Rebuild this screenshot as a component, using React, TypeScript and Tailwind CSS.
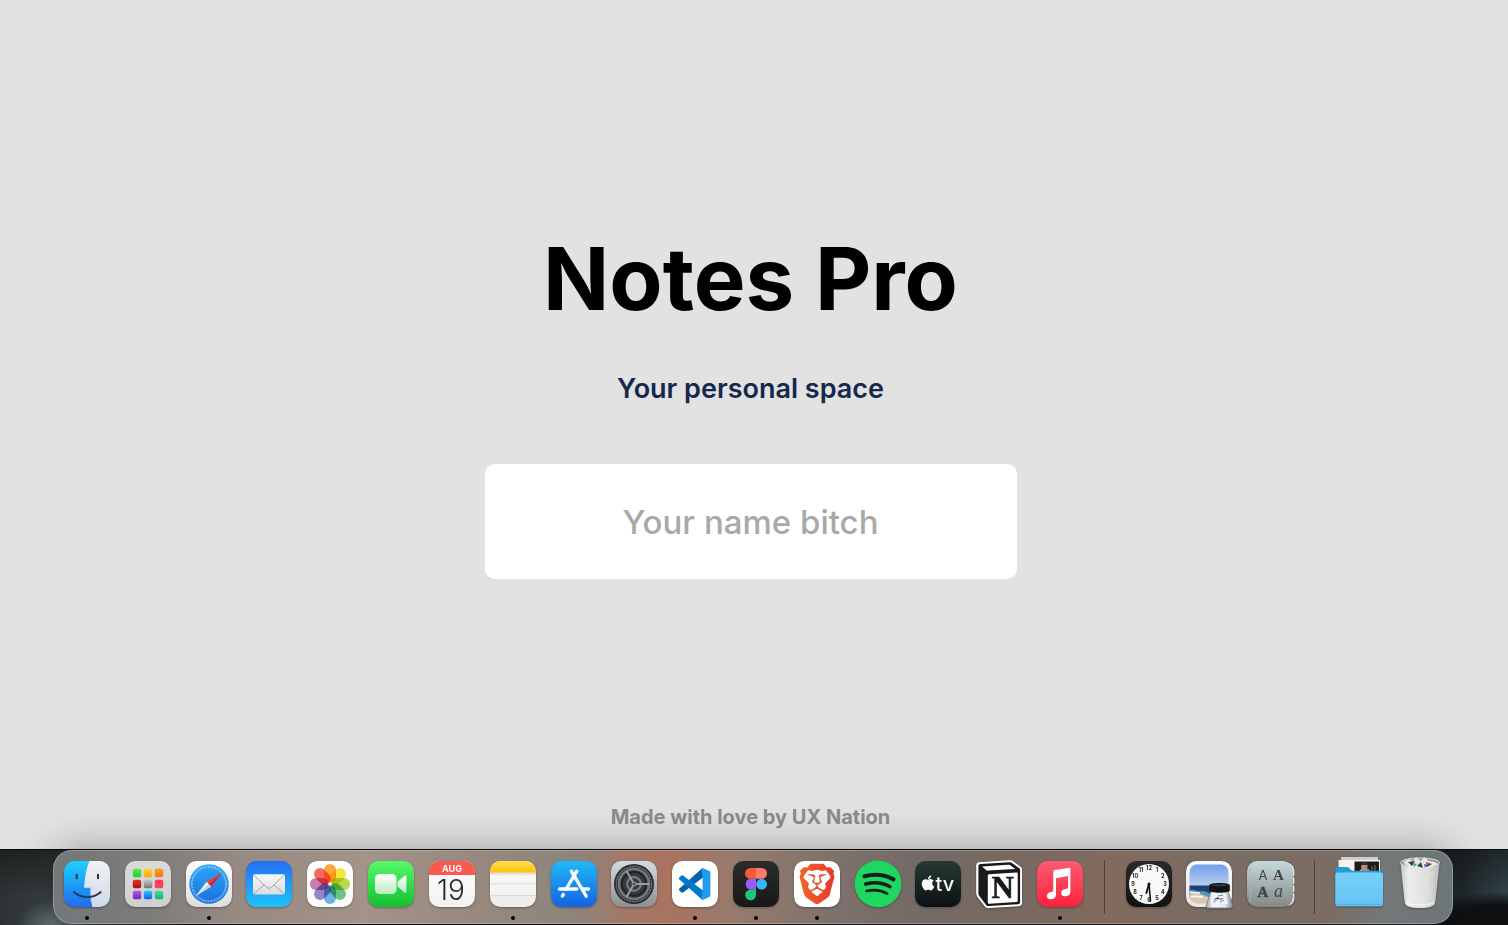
import React from "react";
import { FaApple } from "react-icons/fa";
import { SiBrave } from "react-icons/si";

const SANS = "Inter, 'Liberation Sans', sans-serif";
const SERIF = "'Liberation Serif', serif";

function Gradient({ id, stops }: { id: string; stops: string[] }) {
  return (
    <linearGradient id={id} x1="0" y1="0" x2="0" y2="1">
      {stops.map((color, i) => (
        <stop key={i} offset={i / (stops.length - 1)} stopColor={color} />
      ))}
    </linearGradient>
  );
}

function Icon({ children }: { children: React.ReactNode }) {
  return (
    <svg viewBox="0 0 46 46" className="size-[46px] overflow-visible drop-shadow-[0_1px_1px_rgba(0,0,0,0.3)]" aria-hidden="true">
      {children}
    </svg>
  );
}

function Tile({ id, stops }: { id: string; stops: string[] }) {
  return (
    <>
      <defs>
        <Gradient id={id} stops={stops} />
        <clipPath id={id + "-clip"}>
          <rect width="46" height="46" rx="10.5" />
        </clipPath>
      </defs>
      <rect width="46" height="46" rx="10.5" fill={`url(#${id})`} />
    </>
  );
}

function Finder() {
  return (
    <Icon>
      <Tile id="finder" stops={["#1fd0fd", "#1d6cf2"]} />
      <defs><Gradient id="finder-face" stops={["#f3f2f4", "#ced9e8"]} /></defs>
      <path clipPath="url(#finder-clip)" fill="url(#finder-face)" d="M25.5 0C22.5 7 20.8 16 20 26.7h6.4c-.2 7 .2 13 2.1 19.3H46V0z" />
      <path d="M12.7 13.8v3.5M34 13.8v3.5" stroke="#263a50" strokeWidth="2.1" strokeLinecap="round" />
      <path d="M9.8 31c7.8 6.800 19.300 6.800 27 0" fill="none" stroke="#26384d" strokeWidth="1.7" strokeLinecap="round" />
    </Icon>
  );
}

const launchpadCells = [
  ["#61e94c", "#20cf35"], ["#ffd22e", "#fba80b"], ["#ffa41a", "#ea7813"],
  ["#ea2f2c", "#ac100d"], ["#c5cdd0", "#6d7476"], ["#ff3d59", "#ff4162"],
  ["#b65ae5", "#7625b5"], ["#22cbfa", "#175af0"], ["#43dfa4", "#17ae79"],
];

function Launchpad() {
  return (
    <Icon>
      <Tile id="launchpad" stops={["#d9dad9", "#cfd0cf"]} />
      {launchpadCells.map((stops, i) => (
        <React.Fragment key={i}>
          <defs><Gradient id={`launch-${i}`} stops={stops} /></defs>
          <rect x={7.8 + (i % 3) * 11} y={7.8 + Math.floor(i / 3) * 11} width="8.4" height="8.4" rx="1.8" fill={`url(#launch-${i})`} />
        </React.Fragment>
      ))}
    </Icon>
  );
}

function Safari() {
  return (
    <Icon>
      <Tile id="safari" stops={["#ffffff", "#dddddf"]} />
      <defs><Gradient id="safari-sea" stops={["#2ba7f7", "#1c70dc"]} /></defs>
      <circle cx="23" cy="23" r="19.7" fill="url(#safari-sea)" />
      <circle cx="23" cy="23" r="17.2" fill="none" stroke="#c2e5ff" strokeWidth="2.2" strokeDasharray=".6 .9" opacity=".85" />
      <path d="M36.4 11.2 25.2 25.5l-4.6-4.8z" fill="#ec413c" />
      <path d="m9.8 35 10.8-14.3 4.6 4.8z" fill="#f0f5fa" />
      <path d="m9.8 35 13.1-11.9 2.3 2.4z" fill="#c4d2df" />
      <path d="M36.4 11.2 25.2 25.5l-2.3-2.4z" fill="#c92c32" />
    </Icon>
  );
}

function Mail() {
  return (
    <Icon>
      <Tile id="mail" stops={["#236ef3", "#1fc4fb"]} />
      <defs><Gradient id="mail-paper" stops={["#f8f8f8", "#d9dcde"]} /></defs>
      <rect x="7" y="13.2" width="32" height="20.2" rx="1.8" fill="url(#mail-paper)" />
      <path d="m7.6 14 13 12.2c1.6 1.4 3.2 1.4 4.8 0L38.4 14M7.8 32.8l10.4-9M38.2 32.8l-10.4-9" fill="none" stroke="#9b9ea2" strokeWidth=".9" />
    </Icon>
  );
}

const petals = ["#fc9a1d", "#f5e11b", "#a9d336", "#52bb72", "#58a7de", "#7c73bf", "#c066a3", "#fa514b"];

function Photos() {
  return (
    <Icon>
      <Tile id="photos" stops={["#ffffff", "#f9f9f9"]} />
      <g clipPath="url(#photos-clip)">
        {petals.map((color, i) => (
          <rect key={color} x="17" y="2.9" width="12" height="18.6" rx="6" fill={color} opacity=".86" transform={`rotate(${i * 45} 23 23)`} style={{ mixBlendMode: "multiply" }} />
        ))}
        <circle cx="23" cy="23" r="1.2" fill="#ffffff" opacity=".8" />
      </g>
    </Icon>
  );
}

function FaceTime() {
  return (
    <Icon>
      <Tile id="facetime" stops={["#58f76c", "#13c02f"]} />
      <defs><Gradient id="camera" stops={["#ffffff", "#b9eac0"]} /></defs>
      <rect x="7" y="13" width="21.5" height="20" rx="4.5" fill="url(#camera)" />
      <path d="m29.600 20.800 7.100-6.100c.8-.6 1.700-.3 1.700.7v15.500c0 1-.9 1.300-1.700.7l-7.100-6.100z" fill="url(#camera)" />
    </Icon>
  );
}

function Calendar() {
  return (
    <Icon>
      <Tile id="calendar" stops={["#ffffff", "#f1f1f0"]} />
      <path clipPath="url(#calendar-clip)" d="M0 0h46v14H0z" fill="#f95950" />
      <text x="23" y="10.800" textAnchor="middle" fontFamily={SANS} fontSize="9" fontWeight="700" fill="#ffffff">AUG</text>
      <text x="22" y="38.500" textAnchor="middle" fontFamily={SANS} fontSize="28" fontWeight="300" fill="#282828">19</text>
    </Icon>
  );
}

function NotesApp() {
  return (
    <Icon>
      <Tile id="notes" stops={["#ffffff", "#eeece8"]} />
      <defs><Gradient id="notes-top" stops={["#ffdd51", "#fdc305"]} /></defs>
      <path clipPath="url(#notes-clip)" d="M0 0h46v11.5H0z" fill="url(#notes-top)" />
      <path d="M0 12h46" stroke="#c8b98d" strokeWidth=".8" />
      <path d="M1 13.8h44" stroke="#b7b5b2" strokeWidth="1" strokeDasharray=".7 1.1" />
      <path d="M0 22.8h46M0 34.7h46" stroke="#cfcfcf" strokeWidth=".8" />
    </Icon>
  );
}

function AppStore() {
  return (
    <Icon>
      <Tile id="store" stops={["#1fb9f8", "#1462e2"]} />
      <g stroke="#f7fbff" strokeWidth="3.4" strokeLinecap="round">
        <path d="M25.8 10.2 15.2 28M20.4 10.2l14.8 25" />
        <path d="M8.5 28h17.2M32 28h5.5M12.200 33.600l-.8 1.400" />
      </g>
    </Icon>
  );
}

function Settings() {
  return (
    <Icon>
      <Tile id="settings" stops={["#d2dde1", "#8e8f8e"]} />
      <circle cx="23" cy="23" r="20" fill="#2b2d2f" />
      <circle cx="23" cy="23" r="17.600" fill="none" stroke="#8e9294" strokeWidth="1.300" strokeDasharray=".9 .7" />
      <circle cx="23" cy="23" r="15" fill="#383b3d" stroke="#75797b" strokeWidth="2.600" />
      <circle cx="23" cy="23" r="12" fill="none" stroke="#202224" strokeWidth="1.800" />
      <circle cx="23" cy="23" r="6.800" fill="none" stroke="#777b7d" strokeWidth="2.200" />
      <path d="M23 23h15M23 23 15.500 10M23 23l-7.500 13" stroke="#9a9ea0" strokeWidth="2" />
      <circle cx="23" cy="23" r="2" fill="#4b4e50" stroke="#9da1a3" />
    </Icon>
  );
}

function Code() {
  return (
    <Icon>
      <Tile id="code" stops={["#ffffff", "#ffffff"]} />
      <path d="m30.5 7 .5 9.5L11 31.4c-.5.4-1.1.4-1.6 0l-2-1.8c-.6-.6-.6-1.4 0-2z" fill="#0065a9" />
      <path d="m30.5 39 .5-9.5L11 14.6c-.5-.4-1.1-.4-1.6 0l-2 1.8c-.6.6-.6 1.4 0 2z" fill="#007acc" />
      <path d="M30.8 39c-.9.4-1.9.2-2.6-.5.9.9 2.4.2 2.4-1V8.500c0-1.200-1.500-1.900-2.400-1 .7-.7 1.700-.9 2.600-.5l6.500 3.100c.7.300 1.100 1 1.100 1.800v22.200c0 .8-.4 1.500-1.100 1.800z" fill="#1f9cf0" />
    </Icon>
  );
}

function FigmaApp() {
  return (
    <Icon>
      <Tile id="figma" stops={["#2c2c2d", "#181819"]} />
      <path d="M23 7h-5.600a5.400 5.400 0 0 0 0 10.800H23z" fill="#f65b32" />
      <path d="M23 7h5.600a5.400 5.400 0 0 1 0 10.800H23z" fill="#ff7a68" />
      <path d="M23 17.800h-5.600a5.400 5.400 0 0 0 0 10.700H23z" fill="#9b5cfb" />
      <circle cx="28.600" cy="23.200" r="5.400" fill="#38b8f8" />
      <path d="M23 28.500h-5.600a5.400 5.400 0 1 0 5.600 5.400z" fill="#18c77c" />
    </Icon>
  );
}

function Brave() {
  return (
    <Icon>
      <Tile id="brave" stops={["#ffffff", "#ffffff"]} />
      <defs>
        <linearGradient id="lion" x1="0" x2="1">
          <stop stopColor="#ef662b" />
          <stop offset="1" stopColor="#e8382a" />
        </linearGradient>
      </defs>
      <SiBrave x="2.500" y="2.500" size={41} fill="url(#lion)" />
    </Icon>
  );
}

function Spotify() {
  return (
    <Icon>
      <circle cx="23" cy="22.800" r="23.400" fill="#1ed760" />
      <g fill="none" stroke="#17201a" strokeLinecap="round">
        <path d="M9.500 15.300c10.200-2.700 20.700-1.500 29 3" strokeWidth="4.200" />
        <path d="M10.700 23c8.800-2.300 17.300-1.200 24.300 2.700" strokeWidth="3.500" />
        <path d="M11.700 30c7.300-1.700 14.300-.8 20.400 2.600" strokeWidth="2.800" />
      </g>
    </Icon>
  );
}

function AppleTV() {
  return (
    <Icon>
      <Tile id="appletv" stops={["#283934", "#0b1113"]} />
      <FaApple x="4.500" y="13.500" size={17} fill="#fafafa" />
      <text x="20.500" y="30" fontFamily={SANS} fontSize="20" fontWeight="500" fill="#fafafa">tv</text>
    </Icon>
  );
}

function NotionApp() {
  return (
    <Icon>
      <path d="M3.5 1.2 33-.7c1.8-.1 2.6.1 4 1l7.4 5.400c1.200.9 1.600 1.600 1.600 3.100v32.800c0 2.200-.8 3.500-3.500 3.700L13 47.100c-2 .1-3-.2-4.100-1.700L2 36.700C.8 35 .2 33.800.2 32V4.700c0-2.200 1-3.400 3.300-3.500z" fill="#ffffff" />
      <path d="M4.500 3 33 1.200c1.500-.1 2 0 3 .8l6.900 5c.9.700 1.200 1 1.200 1.900V41c0 1.400-.5 2.100-2.200 2.300L13 45.100c-1.400.1-2-.1-2.900-1.200L3.700 35.500c-.9-1.300-1.300-2.200-1.300-3.300V5.300C2.400 4 3 3.100 4.500 3z" fill="#191919" />
      <path d="M6 5.400 32.300 3.700c1.100-.1 1.500.1 2.300.7l4.700 3.500-27.400 1.700c-.8.100-1.300-.1-1.900-.6z" fill="#ffffff" />
      <path d="m13 13.200 27.200-1.700c1-.1 1.500.4 1.500 1.400v26.600c0 1-.4 1.500-1.500 1.600L13.400 42.700c-1.100.1-1.600-.4-1.600-1.500V14.700c0-1 .3-1.400 1.200-1.500z" fill="#ffffff" />
      <text x="26.700" y="37" textAnchor="middle" fontFamily={SERIF} fontSize="31" fontWeight="700" fill="#191919" stroke="#191919" strokeWidth=".5">N</text>
    </Icon>
  );
}

function Music() {
  return (
    <Icon>
      <Tile id="music" stops={["#fb5c74", "#fa233b"]} />
      <path d="M16.300 10.900c0-1 .5-1.600 1.400-1.800L32 6.900c.9-.2 1.400.3 1.400 1.200v22.600c0 2.500-1.800 4.300-5 4.600-2.600.2-4.200-1.100-4.200-3.300 0-2.300 1.700-3.800 4.300-4.100 1.700-.2 2.500-.5 2.500-1.900V15l-12 2.300v16.500c0 2.500-1.800 4.200-4.800 4.500-2.700.2-4.300-1.100-4.300-3.300 0-2.300 1.700-3.700 4.200-4 1.600-.2 2.200-.6 2.200-1.900z" fill="#ffffff" />
    </Icon>
  );
}

function Clock() {
  return (
    <Icon>
      <Tile id="clock" stops={["#2a2a2b", "#121213"]} />
      <circle cx="23" cy="23" r="20" fill="#f8f8f7" />
      {Array.from({ length: 12 }, (_, i) => {
        const angle = ((i + 1) * Math.PI) / 6;
        return (
          <text key={i} x={23 + 16 * Math.sin(angle)} y={25 - 16 * Math.cos(angle)} textAnchor="middle" fontFamily={SANS} fontSize="5.500" fontWeight="700" fill="#242424">
            {i + 1}
          </text>
        );
      })}
      <path d="m23 23-2.600 9" stroke="#171717" strokeWidth="2" strokeLinecap="round" />
      <path d="m23 23 1.500 17" stroke="#171717" strokeWidth="1.600" strokeLinecap="round" />
      <circle cx="23" cy="23" r="1.600" fill="#171717" />
    </Icon>
  );
}

function Preview() {
  return (
    <Icon>
      <Tile id="preview" stops={["#fafafa", "#e8e7e4"]} />
      <defs>
        <Gradient id="sky" stops={["#6f9eeb", "#bdd2ef"]} />
        <clipPath id="photo"><rect x="3.500" y="3.500" width="39" height="39" rx="7.500" /></clipPath>
        <linearGradient id="glass" x1="0" x2="1">
          <stop stopColor="#9aa0a4" />
          <stop offset=".25" stopColor="#f4f6f8" />
          <stop offset=".7" stopColor="#e4e9ee" />
          <stop offset="1" stopColor="#858b90" />
        </linearGradient>
      </defs>
      <g clipPath="url(#photo)">
        <path d="M3 3h40v23H3z" fill="url(#sky)" />
        <path d="M3 24.500h40V34H3z" fill="#233f78" />
        <path d="M3 29c6-1 8 2 15 1l7 3v4H3z" fill="#4f98b4" />
        <path d="M3 33c6-1.500 11-.5 14 1l8 3v6H3z" fill="#dac6ae" />
        <path d="M3 31.500c5-.5 7 .8 11 .5M5 36c5-2 8 .2 12 0" stroke="#f7fafa" strokeWidth="1.600" fill="none" />
      </g>
      <path d="M25.500 29h16l5.200 15.500c.5 1.700-.6 2.500-3 2.500H22.500c-2.300 0-3-.9-2.300-2.500z" fill="url(#glass)" stroke="#70767a" strokeWidth=".7" />
      <path d="M27 33h12.500l2.700 10H24.500z" fill="#eef3f8" />
      <path d="m32 35 5-1M28 38.500l4-2 2 2 3-1M27.500 41l3-1.500M34 41l4-2" stroke="#637b95" strokeWidth=".9" />
      <path d="M23.200 24.500c0-3.200 20.600-3.200 20.600 0v5c0 3-20.600 3-20.600 0z" fill="#121314" />
      <path d="M24 24.300c3-1.500 16-1.500 19 0-3 1.300-16 1.300-19 0z" fill="#393c3e" />
    </Icon>
  );
}

function FontBook() {
  return (
    <Icon>
      <path d="M38 1.500c6 0 9.500 3.500 9.500 9v4.200l-1.500 1 1.500 1v6l-1.500 1 1.500 1v6l-1.500 1 1.500 1V37c0 5-3.500 8-9 8z" fill="#d9dddc" />
      <Tile id="fontbook" stops={["#c4dadd", "#858887"]} />
      <path d="M3.500 5v36" stroke="#a9b8ba" strokeWidth="1" opacity=".7" />
      <g textAnchor="middle" fill="#414546">
        <text x="16" y="19" fontFamily={SANS} fontSize="13">A</text>
        <text x="31.500" y="19" fontFamily={SERIF} fontSize="15" fontWeight="700">A</text>
        <text x="16" y="35.500" fontFamily={SERIF} fontSize="15" fontWeight="700" stroke="#414546" strokeWidth=".5">A</text>
        <text x="31.500" y="35.500" fontFamily={SERIF} fontSize="18" fontStyle="italic">a</text>
      </g>
    </Icon>
  );
}

function Folder() {
  return (
    <Icon>
      <defs><Gradient id="folder-front" stops={["#75d1fa", "#66c4f5"]} /></defs>
      <path d="M5-4h37v17H5z" fill="#cfcfce" />
      <path d="M2.500-1h41.500v14H2.500z" fill="#f4f3f1" />
      <path d="M18.500.5H43V13H18.500z" fill="#1e1c19" />
      <path d="M22.500 12c1-3 2-3.500 3-4.500-1-3 .5-5.500 3-5.500s4 2.500 2.500 5.500c2 .5 3 2 3.500 4.500z" fill="#b58f7c" />
      <path d="M25 4c0-4 7-4 7 0z" fill="#39302b" />
      <path d="M36 5v7M39 4v8" stroke="#7c7365" />
      <path d="M-.6 8.500c0-1.600.8-2.500 2.500-2.500h9c3 0 3.200 3.700 6.300 3.700h27.300c1.600 0 2.500.8 2.500 2.500v30.500H-.6z" fill="#259cd3" />
      <path d="M-.6 13.500c0-1.300.8-2 2.200-2h43c1.500 0 2.400.7 2.400 2v29.200c0 1.700-.8 2.500-2.500 2.500H1.900c-1.700 0-2.500-.8-2.500-2.500z" fill="url(#folder-front)" />
      <path d="M0 43.500h46.500" stroke="#4aa9df" strokeWidth=".8" />
    </Icon>
  );
}

function Trash() {
  return (
    <Icon>
      <defs>
        <linearGradient id="bin" x1="0" x2="1">
          <stop stopColor="#c8c8c7" />
          <stop offset=".2" stopColor="#ececeb" />
          <stop offset=".7" stopColor="#dededd" />
          <stop offset="1" stopColor="#bdbdbd" />
        </linearGradient>
      </defs>
      <ellipse cx="23" cy="1.500" rx="19.500" ry="4.500" fill="#8d9290" stroke="#e1e4e3" />
      <path d="m6 1 6-3 4 2 3-4 5 4 3-4 5 4 6 1 3 2-8 5H13z" fill="#e6e8e7" />
      <path d="m11 1 4 4 3-5zM20 5l4-4 2 6zM29 1l6 2-5 3z" fill="#37423f" />
      <path d="m16 2 4 1-3 3z" fill="#2daa91" />
      <path d="m27 3 4 1-3 3z" fill="#3167c5" />
      <path d="m30 1 3 2-4 1z" fill="#dc673d" />
      <path d="M3.500 2c5 6.500 34 6.500 39 0l-4.200 39c-.4 3.500-3.400 6-15.300 6S8.200 44.500 7.700 41z" fill="url(#bin)" />
      <path d="m10 10 9 9-6 13 10 11 10-12-5-11 9-10" fill="none" stroke="#ffffff" strokeWidth="3" opacity=".12" />
      <path d="M9 41c4 4 23 4 28 0" fill="none" stroke="#fafafa" strokeWidth="1.500" opacity=".7" />
    </Icon>
  );
}

interface DockEntry {
  name: string;
  art: () => React.ReactElement;
  running?: boolean;
}

const sections: DockEntry[][] = [
  [
    { name: "Finder", art: Finder, running: true },
    { name: "Launchpad", art: Launchpad },
    { name: "Safari", art: Safari, running: true },
    { name: "Mail", art: Mail },
    { name: "Photos", art: Photos },
    { name: "FaceTime", art: FaceTime },
    { name: "Calendar", art: Calendar },
    { name: "Notes", art: NotesApp, running: true },
    { name: "App Store", art: AppStore },
    { name: "System Preferences", art: Settings },
    { name: "Visual Studio Code", art: Code, running: true },
    { name: "Figma", art: FigmaApp, running: true },
    { name: "Brave", art: Brave, running: true },
    { name: "Spotify", art: Spotify },
    { name: "Apple TV", art: AppleTV },
    { name: "Notion", art: NotionApp },
    { name: "Music", art: Music, running: true },
  ],
  [
    { name: "Clock", art: Clock },
    { name: "Preview", art: Preview },
    { name: "Font Book", art: FontBook },
  ],
  [
    { name: "Downloads", art: Folder },
    { name: "Trash", art: Trash },
  ],
];

function DockButton({ name, art: Art, running }: DockEntry) {
  return (
    <button type="button" aria-label={name} className="flex flex-col items-center gap-[9px]">
      <Art />
      <span className={running ? "size-1 rounded-full bg-black" : "size-1"} />
    </button>
  );
}

function Dock() {
  return (
    <footer className="bg-[radial-gradient(ellipse_34px_26px_at_52px_100%,#667073_0%,transparent_100%),radial-gradient(ellipse_110px_34px_at_100%_100%,#101112_60%,transparent_100%),linear-gradient(180deg,rgba(18,20,20,0.6)_0%,transparent_60%),linear-gradient(90deg,#2c3233_0%,#3c4445_4%,#171212_12%,#1b1517_88%,#232b2f_97%,#34454b_100%)] pt-px pr-[55px] pb-px pl-[53px] shadow-[inset_0_1px_0_#08090a]">
      <nav
        aria-label="Dock"
        className="flex justify-between rounded-[19px] border border-white/25 bg-[linear-gradient(90deg,#737879_0%,#7d7c79_7%,#978a82_13%,#a39389_22%,#98897e_30%,#8c857c_37%,#a37869_41%,#a9735f_44%,#967b6e_49%,#7c716b_56%,#746a66_62%,#776961_68%,#826a5e_76%,#796d65_83%,#7a6c63_91%,#747778_95%,#6d7679_100%)] pt-[10px] pr-[9px] pb-[3px] pl-[10px] shadow-[0_0_40px_rgba(0,0,0,0.32)]"
      >
        {sections.map((entries, i) => (
          <React.Fragment key={i}>
            {i > 0 && <span role="separator" className="mx-[6px] -mt-px mb-[6px] w-px bg-[#4c4039]" />}
            {entries.map((entry) => (
              <DockButton key={entry.name} {...entry} />
            ))}
          </React.Fragment>
        ))}
      </nav>
    </footer>
  );
}

export default function App() {
  return (
    <div className="flex min-h-screen flex-col bg-[#e2e2e2] font-['Inter','Liberation_Sans',sans-serif]">
      <main className="flex flex-1 flex-col items-center pr-[7px] text-center">
        <form className="flex w-full flex-1 flex-col items-center justify-center" onSubmit={(e) => e.preventDefault()}>
          <h1 className="text-[87px] leading-[106px] font-bold text-black">Notes Pro</h1>
          <label htmlFor="name" className="mt-[40px] text-[27px] leading-[34px] font-semibold text-[#14294b]">
            Your personal space
          </label>
          <input
            id="name"
            type="text"
            placeholder="Your name bitch"
            className="mt-[58px] h-[115px] w-full max-w-[532px] rounded-[10px] bg-white pt-[2px] text-center text-[33px] font-medium text-[#333333] outline-none placeholder:text-[#a9a9a9]"
          />
        </form>
        <p className="pb-[19px] text-[20px] leading-[26px] font-bold text-[#8b8b8b]">Made with love by UX Nation</p>
      </main>
      <Dock />
    </div>
  );
}
